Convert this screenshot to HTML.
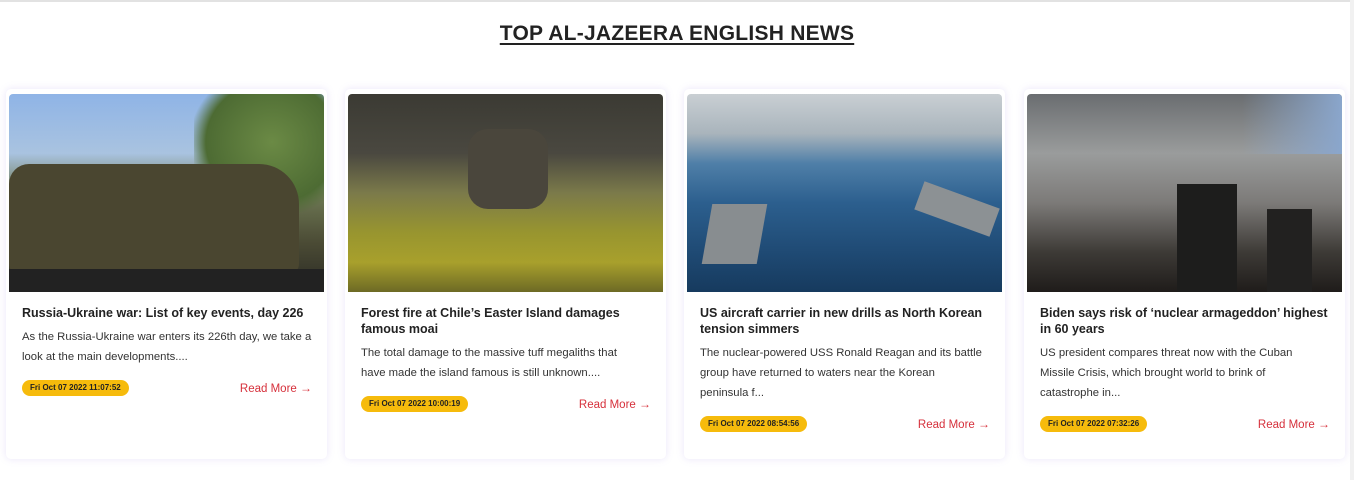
<!DOCTYPE html>
<html><head><meta charset="utf-8"><style>
*{margin:0;padding:0;box-sizing:border-box}
body{width:1354px;height:480px;background:#fff;font-family:"Liberation Sans",sans-serif;position:relative;overflow:hidden}
.top{position:absolute;left:0;top:0;width:1354px;height:2px;background:#e2e2e2}
.sb{position:absolute;right:0;top:0;width:4px;height:480px;background:#f1f1f1}
h1{position:absolute;left:0;width:1354px;top:22px;text-align:center;font-size:21px;font-weight:bold;color:#222;text-decoration:underline;text-underline-offset:3px;text-decoration-thickness:2px;letter-spacing:0.25px}
.card{position:absolute;top:89px;width:321px;height:370px;background:#fff;border-radius:5px;box-shadow:0 0 8px rgba(140,110,220,0.18)}
.img{position:absolute;left:3px;top:5px;width:315px;height:198px;border-radius:4px 4px 0 0;overflow:hidden}
.body{position:absolute;left:16px;top:216px;width:292px}
.t{font-size:12.5px;font-weight:bold;line-height:16px;color:#222}
.d{font-size:11.3px;line-height:20px;color:#333;margin-top:6px;white-space:nowrap}
.row{margin-top:12px;height:17px;display:flex;justify-content:space-between;align-items:center}
.p{background:#f6bb0c;border-radius:9px;font-size:8px;font-weight:bold;color:#222;padding:3px 8px;line-height:10px}
.r{font-size:11.5px;color:#d6303b;margin-right:2px}
.r b{font-size:12px}
</style></head><body>
<div class="top"></div><div class="sb"></div>
<h1>TOP AL-JAZEERA ENGLISH NEWS</h1>

<div class="card" style="left:6px">
<div class="img" style="background:linear-gradient(180deg,#8fb4e6 0%,#a9c3e0 30%,#6f7a55 50%,#4b4b35 75%,#2a2a24 100%)">
<div style="position:absolute;right:0;top:0;width:130px;height:120px;background:radial-gradient(ellipse at 60% 40%,#6b8a45,#4d6b33 60%,transparent 75%)"></div>
<div style="position:absolute;left:0;top:70px;width:290px;height:110px;background:#4a4630;border-radius:20px 40px 10px 10px"></div>
<div style="position:absolute;left:0;top:175px;width:315px;height:23px;background:#222"></div>
</div>
<div class="body"><div class="t">Russia-Ukraine war: List of key events, day 226</div>
<div class="d">As the Russia-Ukraine war enters its 226th day, we take a<br>look at the main developments....</div>
<div class="row"><span class="p">Fri Oct 07 2022 11:07:52</span><span class="r">Read More <b>→</b></span></div></div>
</div>

<div class="card" style="left:345px">
<div class="img" style="background:linear-gradient(180deg,#3b3a33 0%,#4a4840 30%,#7b7a4a 50%,#98952f 70%,#a8a02c 85%,#6d6a25 100%)">
<div style="position:absolute;left:120px;top:35px;width:80px;height:80px;background:#4a463c;border-radius:20px"></div>
</div>
<div class="body"><div class="t">Forest fire at Chile’s Easter Island damages famous moai</div>
<div class="d">The total damage to the massive tuff megaliths that<br>have made the island famous is still unknown....</div>
<div class="row"><span class="p">Fri Oct 07 2022 10:00:19</span><span class="r">Read More <b>→</b></span></div></div>
</div>

<div class="card" style="left:684px">
<div class="img" style="background:linear-gradient(180deg,#c9cfd3 0%,#a9b4bc 20%,#4f7fa8 35%,#2c5f8e 55%,#1f4a74 80%,#163a5e 100%)">
<div style="position:absolute;left:20px;top:110px;width:55px;height:60px;background:#888d90;transform:skewX(-10deg)"></div>
<div style="position:absolute;left:230px;top:100px;width:80px;height:30px;background:#8c9194;transform:rotate(20deg)"></div>
</div>
<div class="body"><div class="t">US aircraft carrier in new drills as North Korean tension simmers</div>
<div class="d">The nuclear-powered USS Ronald Reagan and its battle<br>group have returned to waters near the Korean<br>peninsula f...</div>
<div class="row"><span class="p">Fri Oct 07 2022 08:54:56</span><span class="r">Read More <b>→</b></span></div></div>
</div>

<div class="card" style="left:1024px">
<div class="img" style="background:linear-gradient(180deg,#6a6d70 0%,#9a9c9c 30%,#7c7a78 55%,#3d3a36 80%,#1f1c1a 100%)">
<div style="position:absolute;right:0;top:0;width:100px;height:60px;background:linear-gradient(90deg,transparent,#8aa6cc)"></div>
<div style="position:absolute;left:150px;top:90px;width:60px;height:108px;background:#1d1d1c"></div>
<div style="position:absolute;left:240px;top:115px;width:45px;height:83px;background:#222120"></div>
</div>
<div class="body"><div class="t">Biden says risk of ‘nuclear armageddon’ highest in 60 years</div>
<div class="d">US president compares threat now with the Cuban<br>Missile Crisis, which brought world to brink of<br>catastrophe in...</div>
<div class="row"><span class="p">Fri Oct 07 2022 07:32:26</span><span class="r">Read More <b>→</b></span></div></div>
</div>
</body></html>
